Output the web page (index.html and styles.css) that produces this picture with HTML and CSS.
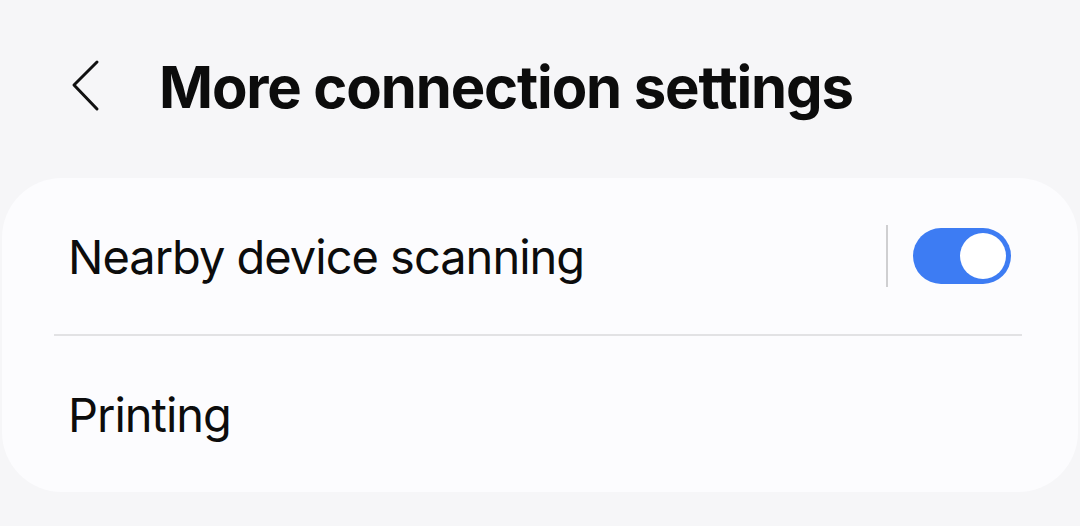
FILE: index.html
```html
<!DOCTYPE html>
<html lang="en">
<head>
<meta charset="utf-8">
<link rel="stylesheet" href="styles.css">
</head>
<body>
<header class="header">
  <svg class="back" width="32" height="56" viewBox="0 0 32 56">
    <path d="M27 3 L4 26 L27 50" fill="none" stroke="#111" stroke-width="3" stroke-linecap="round" stroke-linejoin="round"/>
  </svg>
  <h1 class="title">More connection settings</h1>
</header>
<section class="card">
  <div class="row">
    <span class="label">Nearby device scanning</span>
    <div class="action">
      <span class="vsep"></span>
      <span class="switch"><span class="knob"></span></span>
    </div>
  </div>
  <div class="divider"></div>
  <div class="row">
    <span class="label">Printing</span>
  </div>
</section>
</body>
</html>
```
FILE: styles.css
```css
html, body {
  margin: 0;
  padding: 0;
}
body {
  width: 1080px;
  height: 526px;
  background: #f6f6f8;
  font-family: Inter, "Noto Sans", sans-serif;
  color: #0c0c0c;
  overflow: hidden;
}
.header {
  display: flex;
  align-items: center;
  height: 178px;
  padding-left: 70px;
  box-sizing: border-box;
  padding-bottom: 4px;
}
.back {
  display: block;
  margin-right: 57px;
}
.title {
  margin: 0;
  font-size: 58px;
  font-weight: 700;
  letter-spacing: -1.15px;
}
.card {
  margin: 0 2px;
  background: #fcfcfe;
  border-radius: 60px;
  height: 314px;
  display: flex;
  flex-direction: column;
}
.row {
  display: flex;
  align-items: center;
  justify-content: space-between;
  flex: 1;
  padding: 0 67px 0 66px;
}
.label {
  font-size: 47px;
  font-weight: 400;
  letter-spacing: -1px;
}
.action {
  display: flex;
  align-items: center;
  gap: 25px;
}
.vsep {
  width: 2px;
  height: 62px;
  background: #cfcfd1;
}
.switch {
  width: 98px;
  height: 56px;
  border-radius: 28px;
  background: #3d7cf3;
  display: flex;
  align-items: center;
  justify-content: flex-end;
  padding-right: 5px;
  box-sizing: border-box;
}
.knob {
  width: 46px;
  height: 46px;
  border-radius: 50%;
  background: #fff;
}
.divider {
  height: 2px;
  background: #e2e2e4;
  margin: 0 56px 0 52px;
}
```
